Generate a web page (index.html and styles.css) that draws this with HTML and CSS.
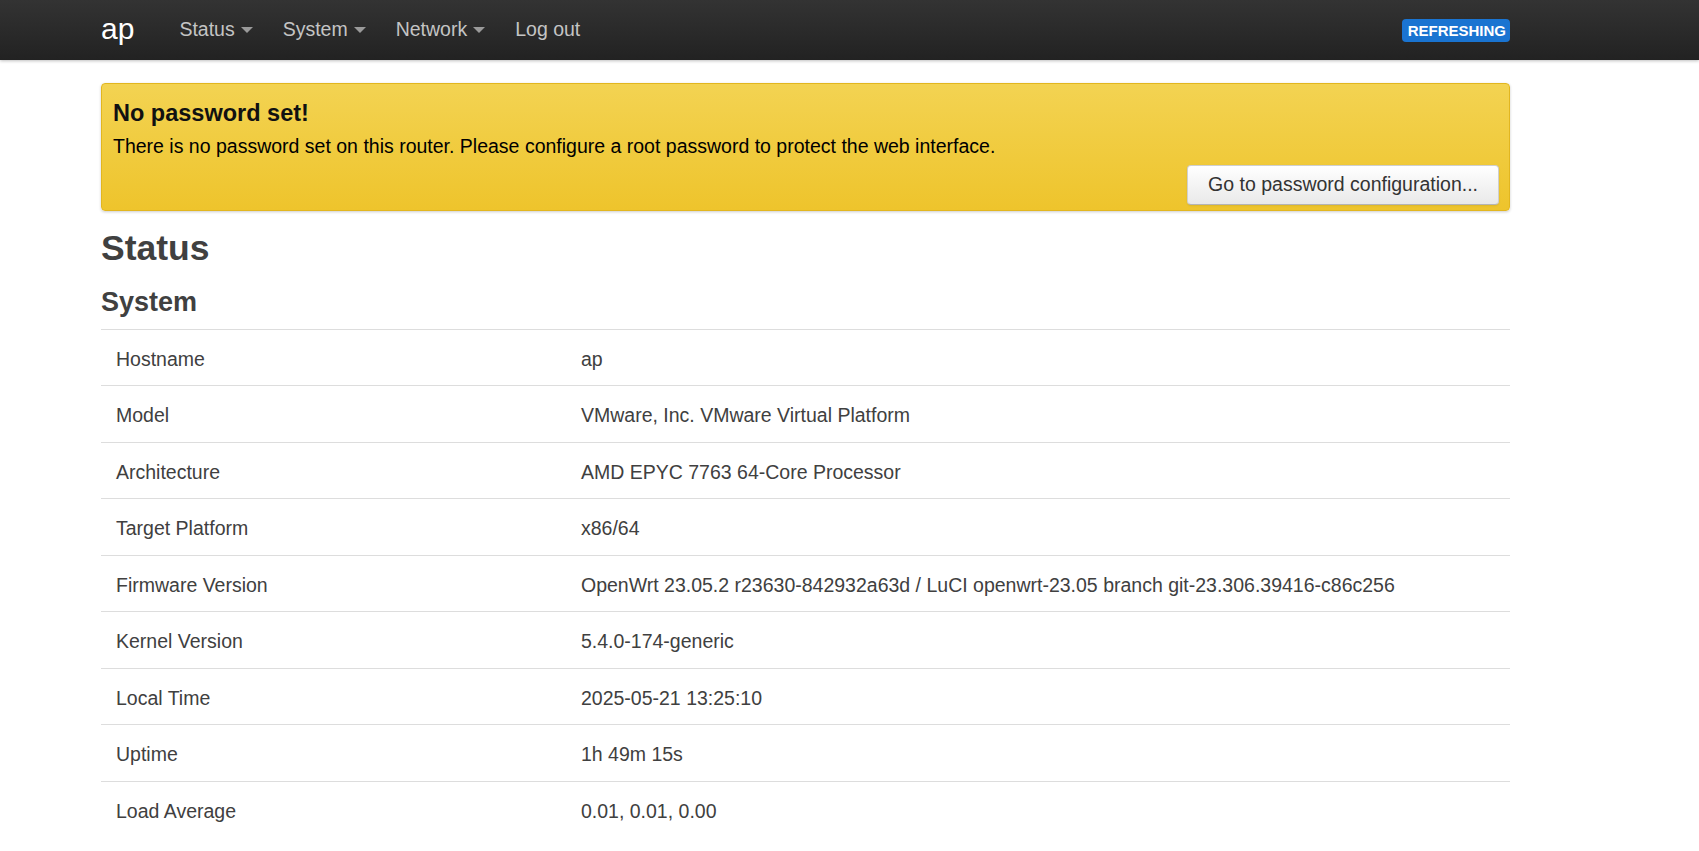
FILE: index.html
```html
<!DOCTYPE html>
<html lang="en">
<head>
<meta charset="utf-8">
<title>ap - Status - LuCI</title>
<link rel="stylesheet" href="styles.css">
</head>
<body>
<header class="topbar">
  <div class="container topbar-inner">
    <a class="brand" href="#">ap</a>
    <ul class="nav">
      <li><a href="#">Status<span class="caret"></span></a></li>
      <li><a href="#">System<span class="caret"></span></a></li>
      <li><a href="#">Network<span class="caret"></span></a></li>
      <li><a href="#">Log out</a></li>
    </ul>
    <span class="label-refresh">REFRESHING</span>
  </div>
</header>
<main class="container">
  <div class="alert">
    <h4 class="alert-title">No password set!</h4>
    <p class="alert-text">There is no password set on this router. Please configure a root password to protect the web interface.</p>
    <div class="alert-actions">
      <button class="btn">Go to password configuration...</button>
    </div>
  </div>
  <h2 class="page-title">Status</h2>
  <h3 class="section-title">System</h3>
  <table class="table">
    <tr><td class="key">Hostname</td><td>ap</td></tr>
    <tr><td class="key">Model</td><td>VMware, Inc. VMware Virtual Platform</td></tr>
    <tr><td class="key">Architecture</td><td>AMD EPYC 7763 64-Core Processor</td></tr>
    <tr><td class="key">Target Platform</td><td>x86/64</td></tr>
    <tr><td class="key">Firmware Version</td><td>OpenWrt 23.05.2 r23630-842932a63d / LuCI openwrt-23.05 branch git-23.306.39416-c86c256</td></tr>
    <tr><td class="key">Kernel Version</td><td>5.4.0-174-generic</td></tr>
    <tr><td class="key">Local Time</td><td>2025-05-21 13:25:10</td></tr>
    <tr><td class="key">Uptime</td><td>1h 49m 15s</td></tr>
    <tr><td class="key">Load Average</td><td>0.01, 0.01, 0.00</td></tr>
  </table>
</main>
</body>
</html>
```
FILE: styles.css
```css
html, body {
  margin: 0;
  padding: 0;
  background: #fff;
}
body {
  font-family: "Liberation Sans", Arial, sans-serif;
  font-size: 19.5px;
  line-height: 27px;
  color: #404040;
}
.container {
  width: 1409px;
  margin-left: 101px;
}
.topbar {
  height: 60px;
  background: linear-gradient(#333333, #222222);
  box-shadow: 0 1px 3px rgba(0,0,0,0.25);
}
.topbar-inner {
  display: flex;
  align-items: center;
  height: 60px;
}
.brand {
  color: #fff;
  text-decoration: none;
  font-size: 30px;
  line-height: 40px;
  padding: 0 30px;
  margin-left: -30px;
  margin-top: -2px;
}
.nav {
  display: flex;
  list-style: none;
  margin: 0;
  padding: 0;
  flex: 1;
}
.nav a {
  display: flex;
  align-items: center;
  color: #c4c4c4;
  text-decoration: none;
  padding: 0 15px;
  line-height: 40px;
  margin-top: -3px;
}
.caret {
  display: inline-block;
  width: 0;
  height: 0;
  margin-left: 6px;
  margin-top: 2px;
  border-left: 6px solid transparent;
  border-right: 6px solid transparent;
  border-top: 6px solid #9a9a9a;
}
.label-refresh {
  background: #1a74d1;
  color: #fff;
  font-weight: bold;
  font-size: 15px;
  line-height: 23px;
  padding: 0 4px 0 6px;
  border-radius: 4px;
  margin-top: 1px;
}
.alert {
  margin-top: 23px;
  padding: 14.5px 10px 5px 11px;
  border: 1px solid #e2b61f;
  border-radius: 4px;
  background: linear-gradient(#f3d352, #eec42c);
  box-shadow: 0 1px 3px rgba(0,0,0,0.2);
  color: #000;
}
.alert-title {
  margin: 0;
  font-size: 23.5px;
  line-height: 28px;
  font-weight: bold;
  color: #111;
}
.alert-text {
  margin: 6px 0 0 0;
  line-height: 27px;
}
.alert-actions {
  display: flex;
  justify-content: flex-end;
  margin-top: 5px;
}
.btn {
  font-family: inherit;
  font-size: 19.5px;
  color: #333;
  height: 40px;
  padding: 0 20px;
  border: 1px solid #cfcfcf;
  border-bottom-color: #b5b5b5;
  border-radius: 4px;
  background: linear-gradient(#ffffff, #e9e9e9);
  box-shadow: inset 0 1px 0 rgba(255,255,255,0.3), 0 1px 2px rgba(0,0,0,0.08);
}
.page-title {
  margin: 16px 0 0 0;
  font-size: 35.5px;
  line-height: 43px;
  font-weight: bold;
  color: #404040;
}
.section-title {
  margin: 16px 0 0 0;
  font-size: 27px;
  line-height: 33px;
  font-weight: bold;
  color: #404040;
}
.table {
  width: 100%;
  border-collapse: collapse;
  margin-top: 10px;
}
.table td {
  border-top: 1px solid #dddddd;
  padding: 16px 15px 12.5px 15px;
  line-height: 27px;
  vertical-align: top;
}
.table td.key {
  width: 33%;
}
```
